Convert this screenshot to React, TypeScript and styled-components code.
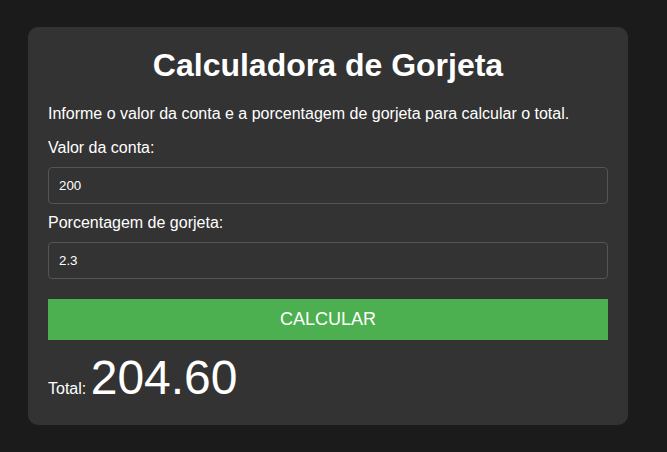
import React, { useState } from "react";
import styled, { createGlobalStyle } from "styled-components";

const GlobalStyle = createGlobalStyle`
  html, body {
    margin: 0;
    padding: 0;
    background: #1b1b1b;
  }
  body {
    padding: 27px 28px;
    font-family: "Liberation Sans", Arial, sans-serif;
    color: #ffffff;
  }
`;

const Card = styled.div`
  width: 600px;
  box-sizing: border-box;
  background: #333333;
  border-radius: 10px;
  padding: 20px 20px 9px;
  display: flex;
  flex-direction: column;
`;

const Title = styled.h1`
  margin: 0 0 21px;
  font-size: 32px;
  font-weight: bold;
  text-align: center;
  line-height: 37px;
`;

const Intro = styled.p`
  margin: 0 0 16px;
  font-size: 16px;
  line-height: 18px;
`;

const Label = styled.label`
  display: block;
  font-size: 16px;
  line-height: 18px;
  margin-bottom: 10px;
`;

const Input = styled.input`
  display: block;
  width: 100%;
  box-sizing: border-box;
  height: 37px;
  padding: 10px;
  margin-bottom: 10px;
  background: #333333;
  border: 1px solid #555555;
  border-radius: 4px;
  color: #ffffff;
  font-family: "Liberation Sans", Arial, sans-serif;
  font-size: 13.33px;
  outline: none;
`;

const LastInput = styled(Input)`
  margin-bottom: 20px;
`;

const Button = styled.button`
  width: 100%;
  height: 41px;
  border: none;
  border-radius: 0;
  background: #4caf50;
  color: #ffffff;
  font-family: "Liberation Sans", Arial, sans-serif;
  font-size: 18px;
  cursor: pointer;
  margin-bottom: 10px;
`;

const Result = styled.div`
  font-size: 16px;
  line-height: 55px;
`;

const Amount = styled.span`
  font-size: 48px;
`;

export default function App() {
  const [bill, setBill] = useState("200");
  const [tip, setTip] = useState("2.3");
  const [total, setTotal] = useState("204.60");

  const calc = () => {
    const b = parseFloat(bill) || 0;
    const t = parseFloat(tip) || 0;
    setTotal((b + (b * t) / 100).toFixed(2));
  };

  return (
    <>
      <GlobalStyle />
      <Card>
        <Title>Calculadora de Gorjeta</Title>
        <Intro>Informe o valor da conta e a porcentagem de gorjeta para calcular o total.</Intro>
        <Label htmlFor="bill">Valor da conta:</Label>
        <Input id="bill" value={bill} onChange={(e) => setBill(e.target.value)} />
        <Label htmlFor="tip">Porcentagem de gorjeta:</Label>
        <LastInput id="tip" value={tip} onChange={(e) => setTip(e.target.value)} />
        <Button onClick={calc}>CALCULAR</Button>
        <Result>
          Total: <Amount>{total}</Amount>
        </Result>
      </Card>
    </>
  );
}
